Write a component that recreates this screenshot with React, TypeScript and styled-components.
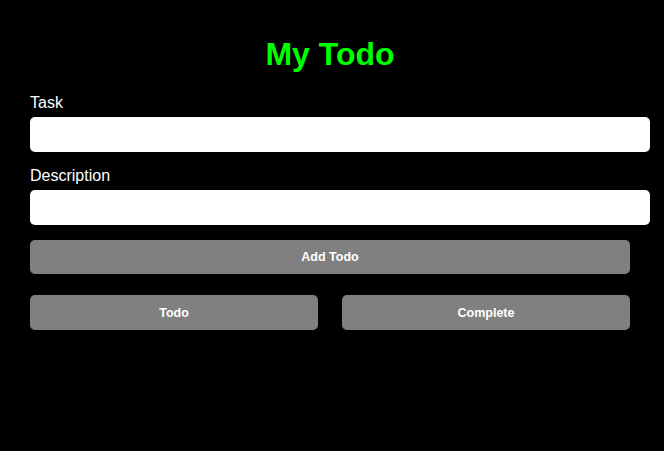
import React, { useState } from 'react';
import styled, { createGlobalStyle } from 'styled-components';

const GlobalStyle = createGlobalStyle`
  html, body {
    margin: 0;
    padding: 0;
    background-color: #000;
    font-family: "Liberation Sans", Arial, sans-serif;
  }
`;

const Page = styled.div`
  width: 600px;
  padding: 36px 30px 0;
`;

const Title = styled.h1`
  margin: 0 0 21px;
  text-align: center;
  color: #00ff00;
  font-size: 32px;
  font-weight: bold;
  line-height: 37px;
`;

const Field = styled.div`
  display: flex;
  flex-direction: column;
  gap: 5px;
  margin-bottom: 15px;
`;

const Label = styled.label`
  color: #fff;
  font-size: 16px;
  line-height: 18px;
`;

const Input = styled.input`
  box-sizing: border-box;
  width: 620px;
  height: 35px;
  padding: 0 10px;
  border: none;
  border-radius: 5px;
  background: #fff;
  font-family: inherit;
  font-size: 14px;
  outline: none;
`;

const Button = styled.button`
  height: 34px;
  border: none;
  border-radius: 5px;
  background-color: #808080;
  color: #fff;
  font-family: inherit;
  font-size: 12.5px;
  font-weight: bold;
  cursor: pointer;
`;

const AddButton = styled(Button)`
  width: 100%;
`;

const ToggleRow = styled.div`
  display: grid;
  grid-template-columns: 1fr 1fr;
  gap: 24px;
  margin-top: 21px;

  ${Button} {
    height: 35px;
  }
`;

const App: React.FC = () => {
  const [task, setTask] = useState('');
  const [description, setDescription] = useState('');

  return (
    <>
      <GlobalStyle />
      <Page>
        <Title>My Todo</Title>
        <Field>
          <Label htmlFor="task">Task</Label>
          <Input id="task" type="text" value={task} onChange={e => setTask(e.target.value)} />
        </Field>
        <Field>
          <Label htmlFor="description">Description</Label>
          <Input
            id="description"
            type="text"
            value={description}
            onChange={e => setDescription(e.target.value)}
          />
        </Field>
        <AddButton type="button">Add Todo</AddButton>
        <ToggleRow>
          <Button type="button">Todo</Button>
          <Button type="button">Complete</Button>
        </ToggleRow>
      </Page>
    </>
  );
};

export default App;
